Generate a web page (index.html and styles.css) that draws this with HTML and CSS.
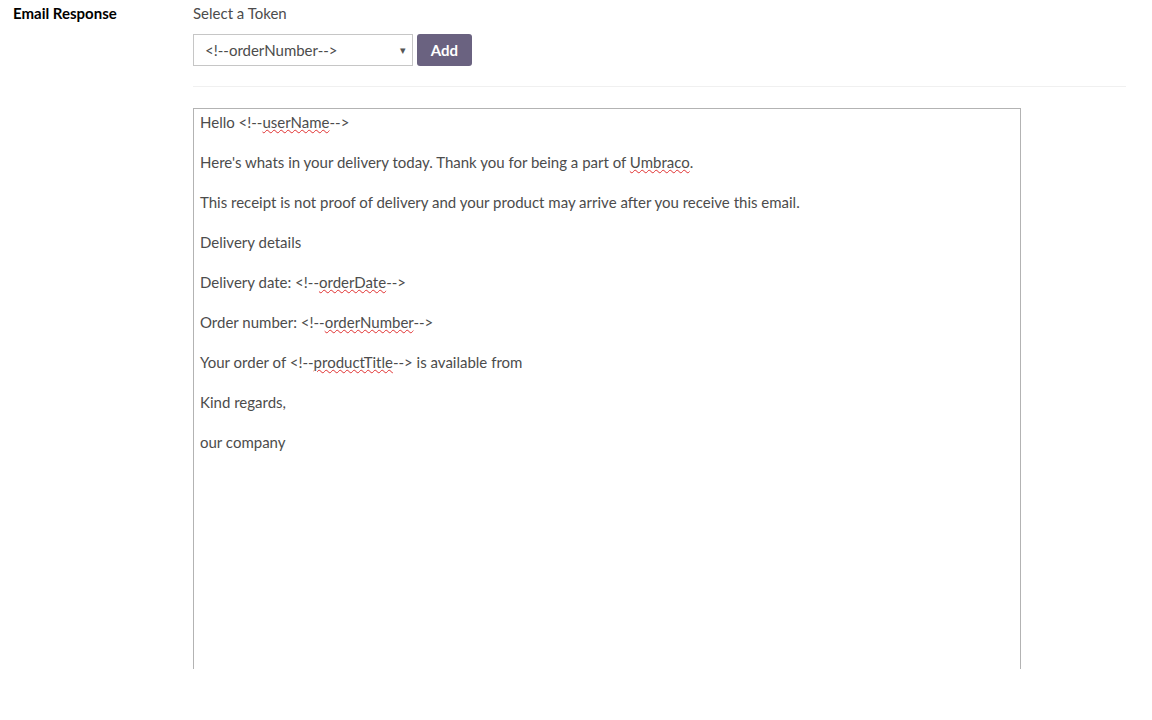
FILE: index.html
```html
<!DOCTYPE html>
<html lang="en">
<head>
    <meta charset="UTF-8">
    <title>Email Response</title>
    <link rel="stylesheet" href="styles.css">
</head>
<body>
    <div class="property">
        <div class="property-label">Email Response</div>
        <div class="property-editor">
            <div class="token-label">Select a Token</div>
            <div class="token-row">
                <div class="token-select">
                    <span>&lt;!--orderNumber--&gt;</span>
                    <span class="caret">&#9662;</span>
                </div>
                <button type="button" class="add-btn">Add</button>
            </div>
            <hr class="divider">
            <div class="editor-frame">
                <p>Hello &lt;!--<span class="spell">userName</span>--&gt;</p>
                <p>Here's whats in your delivery today. Thank you for being a part of <span class="spell">Umbraco</span>.</p>
                <p>This receipt is not proof of delivery and your product may arrive after you receive this email.</p>
                <p>Delivery details</p>
                <p>Delivery date: &lt;!--<span class="spell">orderDate</span>--&gt;</p>
                <p>Order number: &lt;!--<span class="spell">orderNumber</span>--&gt;</p>
                <p>Your order of &lt;!--<span class="spell">productTitle</span>--&gt; is available from</p>
                <p>Kind regards,</p>
                <p>our company</p>
            </div>
        </div>
    </div>
</body>
</html>
```

FILE: styles.css
```css
* {
    margin: 0;
    padding: 0;
    box-sizing: border-box;
}

body {
    font-family: Lato, 'Open Sans', sans-serif;
    font-size: 15px;
    line-height: 20px;
    color: #4c4c4c;
    background: #fff;
}

.property {
    display: flex;
    padding: 3px 26px 0 13px;
}

.property-label {
    width: 180px;
    flex-shrink: 0;
    font-weight: 700;
    color: #000;
}

.property-editor {
    flex: 1;
}

.token-row {
    display: flex;
    gap: 4px;
    margin-top: 11px;
}

.token-select {
    width: 220px;
    height: 32px;
    border: 1px solid #c6c6c6;
    display: flex;
    align-items: center;
    justify-content: space-between;
    padding: 0 6px 0 11px;
    color: #4c4c4c;
}

.caret {
    font-size: 11px;
    color: #555;
}

.add-btn {
    width: 55px;
    height: 32px;
    border: none;
    border-radius: 3px;
    background: #6a6280;
    color: #fff;
    font-family: Lato, sans-serif;
    font-size: 15px;
    font-weight: 700;
}

.divider {
    border: none;
    border-top: 1px solid #f0f0f0;
    margin: 20px 0 21px;
}

.editor-frame {
    width: 828px;
    height: 561px;
    border: 1px solid #b3b3b3;
    border-bottom: none;
    padding: 3px 6px;
    overflow: hidden;
}

.editor-frame p {
    margin-bottom: 20px;
}

.spell {
    text-decoration: underline wavy #e03030;
    text-decoration-thickness: 1px;
    text-underline-offset: 1px;
}
```
